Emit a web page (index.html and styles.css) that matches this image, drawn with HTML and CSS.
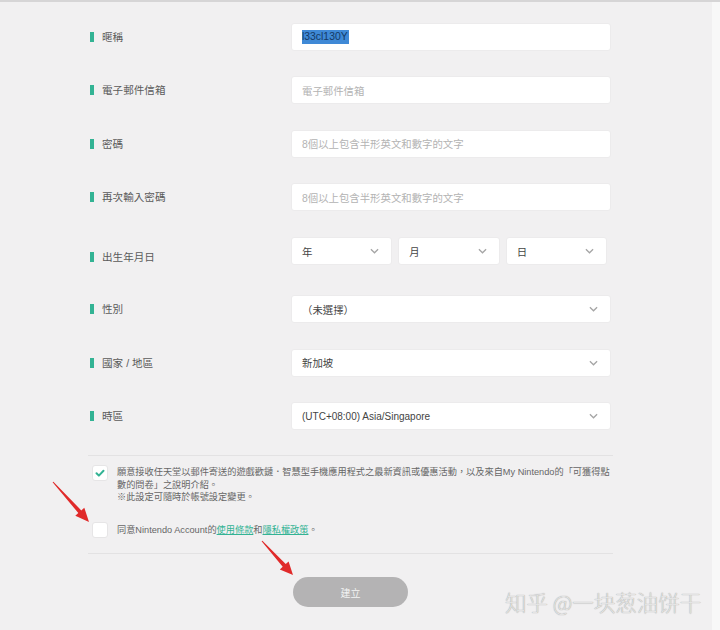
FILE: index.html
```html
<!DOCTYPE html>
<html lang="zh-Hant">
<head>
<meta charset="utf-8">
<title>Nintendo Account</title>
<link rel="stylesheet" href="styles.css">
</head>
<body>
<div class="page">
  <div class="main">
    <form class="form">
      <div class="row">
        <div class="label"><span class="bar"></span>暱稱</div>
        <div class="field input"><span class="selected">l33cl130Y</span></div>
      </div>
      <div class="row">
        <div class="label"><span class="bar"></span>電子郵件信箱</div>
        <div class="field input placeholder">電子郵件信箱</div>
      </div>
      <div class="row">
        <div class="label"><span class="bar"></span>密碼</div>
        <div class="field input placeholder">8個以上包含半形英文和數字的文字</div>
      </div>
      <div class="row">
        <div class="label"><span class="bar"></span>再次輸入密碼</div>
        <div class="field input placeholder">8個以上包含半形英文和數字的文字</div>
      </div>
      <div class="row birth">
        <div class="label"><span class="bar"></span>出生年月日</div>
        <div class="dates">
          <div class="input select"><span>年</span><svg class="chev" viewBox="0 0 10 6"><path d="M1 1l4 4 4-4"/></svg></div>
          <div class="input select"><span>月</span><svg class="chev" viewBox="0 0 10 6"><path d="M1 1l4 4 4-4"/></svg></div>
          <div class="input select"><span>日</span><svg class="chev" viewBox="0 0 10 6"><path d="M1 1l4 4 4-4"/></svg></div>
        </div>
      </div>
      <div class="row">
        <div class="label"><span class="bar"></span>性別</div>
        <div class="field input select"><span>（未選擇）</span><svg class="chev" viewBox="0 0 10 6"><path d="M1 1l4 4 4-4"/></svg></div>
      </div>
      <div class="row">
        <div class="label"><span class="bar"></span>國家 / 地區</div>
        <div class="field input select"><span>新加坡</span><svg class="chev" viewBox="0 0 10 6"><path d="M1 1l4 4 4-4"/></svg></div>
      </div>
      <div class="row last">
        <div class="label"><span class="bar"></span>時區</div>
        <div class="field input select"><span class="latin">(UTC+08:00) Asia/Singapore</span><svg class="chev" viewBox="0 0 10 6"><path d="M1 1l4 4 4-4"/></svg></div>
      </div>

      <div class="checks">
        <div class="check-item multi">
          <span class="box checked"><svg viewBox="0 0 12 12"><path d="M2.5 6.2l2.4 2.4 4.6-4.8"/></svg></span>
          <p class="check-text">願意接收任天堂以郵件寄送的遊戲歡鏈．智慧型手機應用程式之最新資訊或優惠活動，以及來自My Nintendo的「可獲得點<br>數的問卷」之說明介紹。<br>※此設定可隨時於帳號設定變更。</p>
        </div>
        <div class="check-item single">
          <span class="box"></span>
          <p class="check-text">同意Nintendo Account的<a href="#">使用條款</a>和<a href="#">隱私權政策</a>。</p>
        </div>
      </div>

      <div class="actions">
        <button type="button" class="submit">建立</button>
      </div>
    </form>
  </div>
  <div class="edge"></div>

  <svg class="arrows" viewBox="0 0 720 630" width="720" height="630">
    <polygon points="52.6,482.3 78.3,513.0 75.3,515.7 89,522 84.3,507.7 81.3,510.4 53.4,481.7"/>
    <polygon points="261.6,541.3 282.7,566.8 279.8,569.4 293,575 288.6,561.4 285.7,564.1 262.4,540.7"/>
  </svg>
  <div class="watermark">知乎 @一块葱油饼干</div>
</div>
</body>
</html>
```

FILE: styles.css
```css
* { box-sizing: border-box; }

html, body {
  margin: 0;
  padding: 0;
}

body {
  background: #f1f0f1;
  font-family: "Liberation Sans", "Noto Sans CJK TC", sans-serif;
  color: #555;
}

.page {
  position: relative;
  width: 720px;
  height: 630px;
  display: flex;
  border-top: 2px solid #d6d5d6;
  overflow: hidden;
}

.main {
  flex: 1;
}

.edge {
  width: 8px;
  background: #f8f8f8;
}

.form {
  margin: 0 0 0 88px;
  width: 525px;
  padding-top: 20.7px;
}

.row {
  display: flex;
  align-items: center;
  height: 28px;
  margin-bottom: 25.6px;
}

.row.birth {
  align-items: flex-start;
  margin-bottom: 30px;
}

.row.birth .label {
  margin-top: 13px;
}

.row.last {
  margin-bottom: 25px;
}

.label {
  width: 203px;
  display: flex;
  align-items: center;
  padding-left: 2px;
  font-size: 10.6px;
  line-height: 14px;
  color: #5a5a5a;
}

.bar {
  display: inline-block;
  width: 4px;
  height: 10px;
  background: #33b394;
  margin-right: 8px;
}

.input {
  height: 28px;
  background: #fff;
  border: 1px solid #ecebec;
  border-radius: 3px;
  display: flex;
  align-items: center;
  padding: 0 10px;
  font-size: 10.4px;
  color: #444;
}

.field {
  width: 320px;
}

.placeholder {
  color: #b3b3b3;
}

.selected {
  background: #3f89d6;
  color: #143a66;
  line-height: 14px;
  padding: 0 1px 0 0;
}

.select {
  justify-content: space-between;
  padding-right: 12px;
}

.latin {
  font-size: 10px;
}

.chev {
  width: 9px;
  height: 6px;
  fill: none;
  stroke: #a5a5a5;
  stroke-width: 1.4;
}

.dates {
  display: grid;
  grid-template-columns: repeat(3, 1fr);
  gap: 6px;
  width: 316px;
}

.checks {
  border-top: 1px solid #e3e2e3;
  border-bottom: 1px solid #e3e2e3;
  padding: 10px 0 15px 4px;
}

.check-item {
  display: flex;
  gap: 9px;
}

.check-item.multi {
  align-items: flex-start;
}

.check-item.single {
  align-items: center;
  margin-top: 19px;
}

.box {
  flex: none;
  width: 16px;
  height: 16px;
  background: #fff;
  border: 1px solid #e6e5e6;
  border-radius: 3px;
  display: flex;
  align-items: center;
  justify-content: center;
}

.box.checked {
  margin-top: -1px;
}

.box svg {
  width: 12px;
  height: 12px;
  fill: none;
  stroke: #33b394;
  stroke-width: 2;
  stroke-linecap: round;
  stroke-linejoin: round;
}

.check-text {
  margin: 0;
  font-size: 9.2px;
  line-height: 12.3px;
  color: #666;
  white-space: nowrap;
}

.single .check-text {
  line-height: 16px;
}

.check-text a {
  color: #33b394;
  text-decoration: underline;
}

.actions {
  display: flex;
  justify-content: center;
  padding-top: 23px;
}

.submit {
  width: 115px;
  height: 30px;
  border: none;
  border-radius: 15px;
  background: #b4b3b4;
  color: #f3f3f3;
  font-family: "Liberation Sans", "Noto Sans CJK TC", sans-serif;
  font-size: 10px;
  padding: 0;
}

.arrows {
  position: absolute;
  left: 0;
  top: -2px;
  pointer-events: none;
}

.arrows polygon {
  fill: #e02a2a;
}

.watermark {
  position: absolute;
  left: 505px;
  top: 586px;
  font-family: "Noto Sans CJK SC", sans-serif;
  font-size: 21.5px;
  line-height: 28px;
  font-weight: 300;
  color: #e4e4e4;
  text-shadow: 0 0 1px #8a8a8a;
  white-space: nowrap;
}
```
